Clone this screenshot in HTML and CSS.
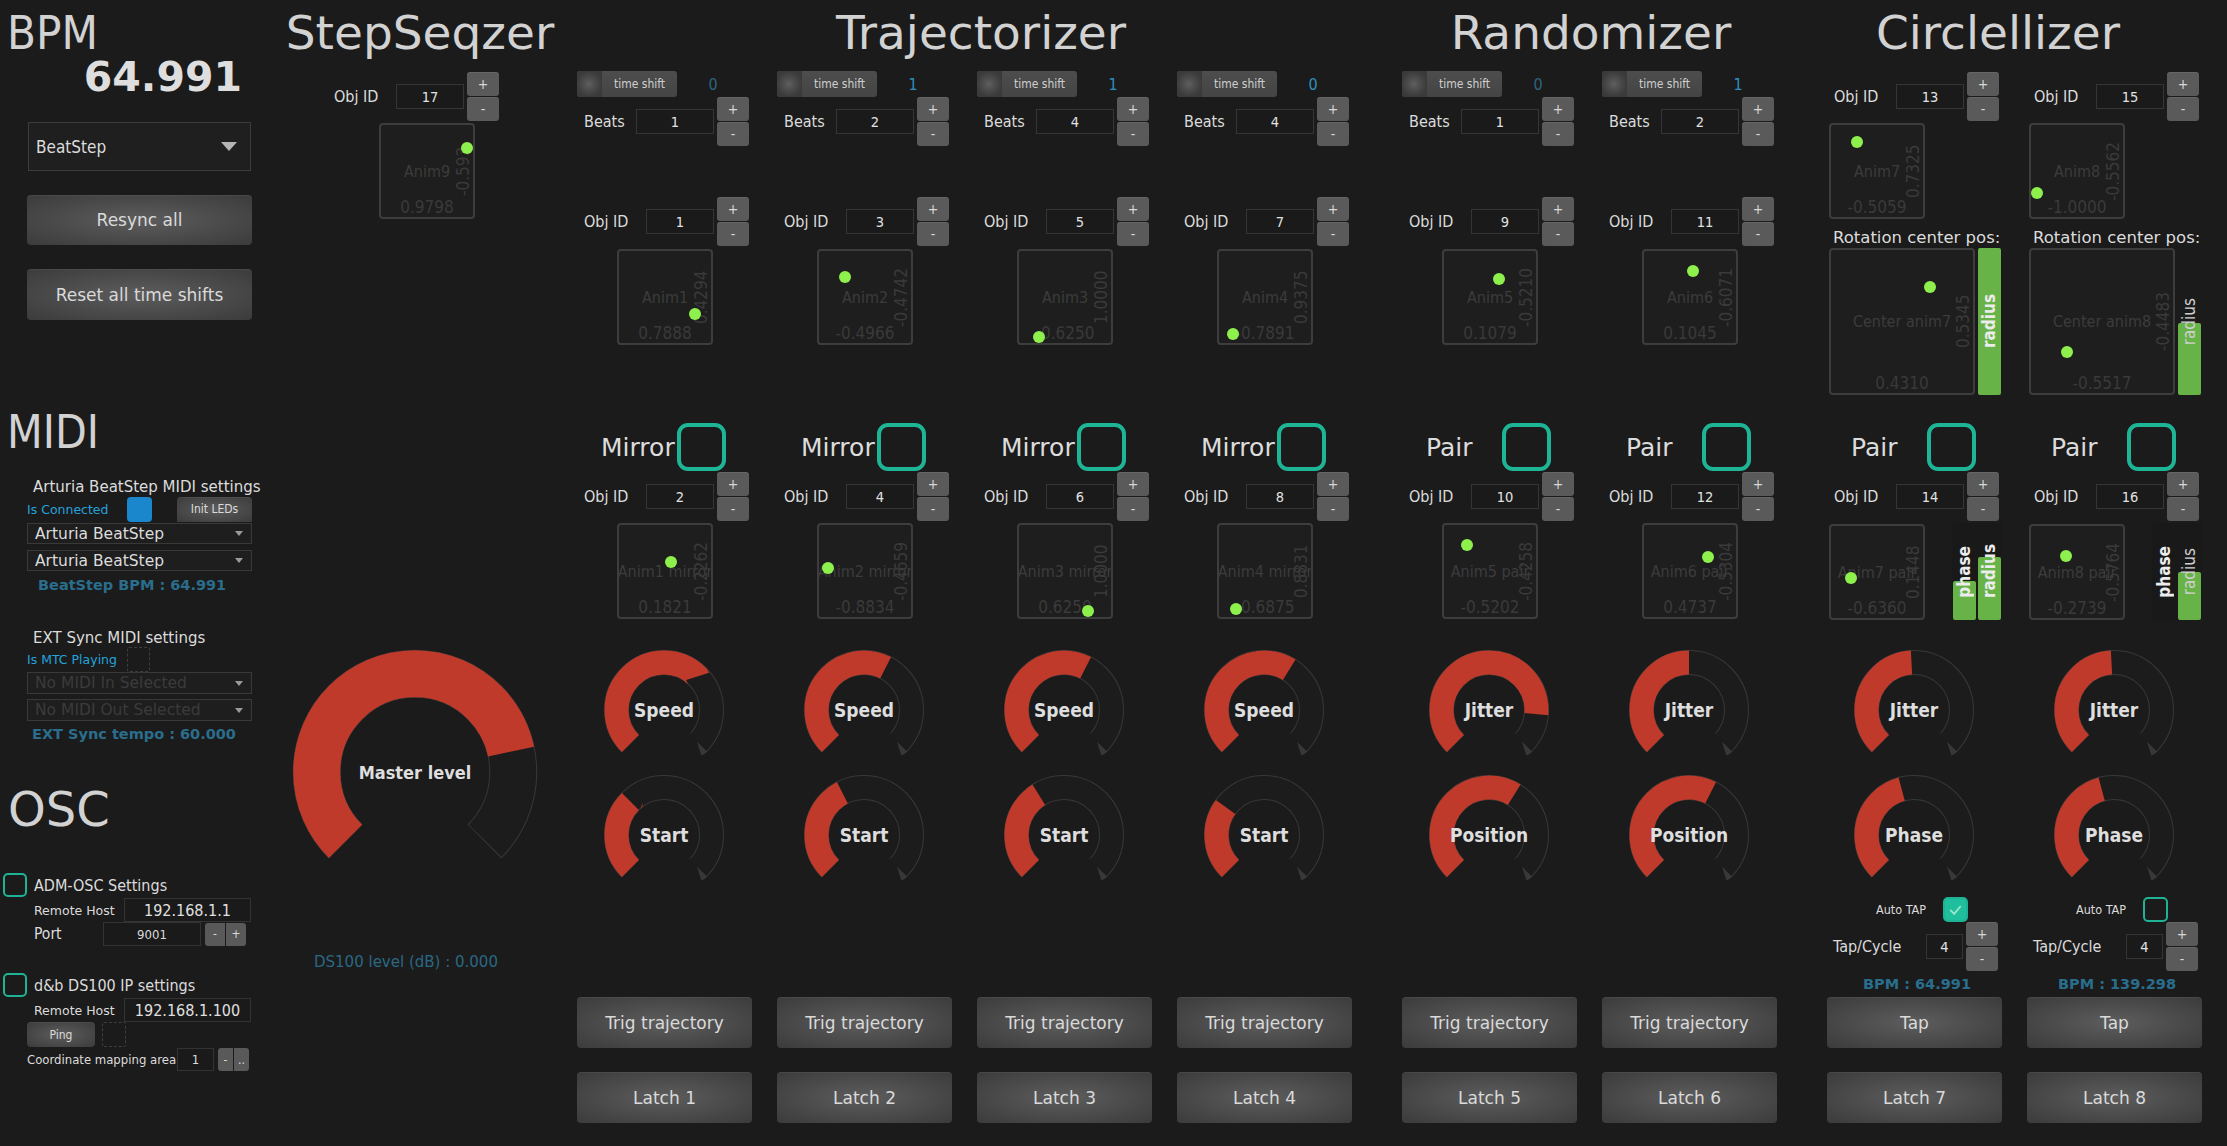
FILE: index.html
```html
<!DOCTYPE html>
<html>
<head>
<meta charset="utf-8">
<title>Sequencer</title>
<link rel="stylesheet" href="styles.css">
</head>
<body>
<div class="app">

  <aside class="left">
    <div class="big-h bpm-h">BPM</div>
    <div class="bpm-val">64.991</div>
    <div class="combo-big"><span>BeatStep</span><i class="tri"></i></div>
    <div class="btn wide resync">Resync all</div>
    <div class="btn wide reset">Reset all time shifts</div>

    <div class="big-h sub-h midi-h">MIDI</div>
    <div class="grp-t">Arturia BeatStep MIDI settings</div>
    <div class="lrow conn"><span class="blue-lbl">Is Connected</span><span class="led-on"></span><span class="btn init">Init LEDs</span></div>
    <div class="combo-s c1"><span>Arturia BeatStep</span><i class="arr"></i></div>
    <div class="combo-s c2"><span>Arturia BeatStep</span><i class="arr"></i></div>
    <div class="stat s1">BeatStep BPM : 64.991</div>
    <div class="grp-t ext">EXT Sync MIDI settings</div>
    <div class="lrow mtc"><span class="blue-lbl">Is MTC Playing</span><span class="dash-box"></span></div>
    <div class="combo-s dis d1"><span>No MIDI In Selected</span><i class="arr"></i></div>
    <div class="combo-s dis d2"><span>No MIDI Out Selected</span><i class="arr"></i></div>
    <div class="stat s2">EXT Sync tempo : 60.000</div>

    <div class="big-h sub-h osc-h">OSC</div>
    <div class="lrow adm"><span class="chk-s"></span><span class="grp-t2">ADM-OSC Settings</span></div>
    <div class="lrow rh"><span class="sm-lbl">Remote Host</span><span class="inp-l">192.168.1.1</span></div>
    <div class="lrow port"><span class="md-lbl">Port</span><span class="inp-port">9001</span><span class="mini m1">-</span><span class="mini">+</span></div>
    <div class="lrow ds"><span class="chk-s"></span><span class="grp-t2">d&amp;b DS100 IP settings</span></div>
    <div class="lrow rh rh2"><span class="sm-lbl">Remote Host</span><span class="inp-l">192.168.1.100</span></div>
    <div class="lrow ping"><span class="btn ping-b">Ping</span><span class="dash-box db2"></span></div>
    <div class="lrow coord"><span class="coord-lbl">Coordinate mapping area</span><span class="inp-c">1</span><span class="mini m1 mc">-</span><span class="mini mc">..</span></div>
  </aside>

  <section class="sect step">
    <h1 class="title">StepSeqzer</h1>
    <div class="step-col">
      <div class="frow top10"><span class="lbl">Obj ID</span><span class="inp">17</span><span class="stepper"><b>+</b><b>-</b></span></div>
      <div class="pad p-step"><span class="pad-name">Anim9</span><span class="pad-x">0.9798</span><span class="pad-y">-0.593</span><i class="dot" style="left:93%;top:25%"></i></div>
    </div>
    <div class="knob master">
      <svg viewBox="-122 -122 244 244"><circle class="ke big" r="98.25" transform="rotate(135)" pathLength="360"/><circle class="kt big" r="98.25" transform="rotate(135.6)" pathLength="360"/><circle class="kv big" r="98.25" transform="rotate(135)" pathLength="360" style="stroke-dasharray:213 360"/></svg>
      <span class="k-lbl">Master level</span>
    </div>
    <div class="ds-level">DS100 level (dB) : 0.000</div>
  </section>

  <section class="sect traj">
    <h1 class="title">Trajectorizer</h1>
    <div class="cols">
      <!-- col 1 -->
      <div class="col">
        <div class="ts-row"><div class="ts-btn"><span class="ts-led"></span><span class="ts-txt">time shift</span></div><span class="ts-val dim">0</span></div>
        <div class="frow"><span class="lbl w52">Beats</span><span class="inp w78">1</span><span class="stepper"><b>+</b><b>-</b></span></div>
        <div class="frow top51"><span class="lbl">Obj ID</span><span class="inp">1</span><span class="stepper"><b>+</b><b>-</b></span></div>
        <div class="pad p-main"><span class="pad-name">Anim1</span><span class="pad-x">0.7888</span><span class="pad-y">0.4294</span><i class="dot" style="left:83%;top:69%"></i></div>
        <div class="chk-row"><span class="chk-lbl">Mirror</span><span class="chk-big"></span></div>
        <div class="frow top1"><span class="lbl">Obj ID</span><span class="inp">2</span><span class="stepper"><b>+</b><b>-</b></span></div>
        <div class="pad p-main p2"><span class="pad-name">Anim1 mirror</span><span class="pad-x">0.1821</span><span class="pad-y">-0.2262</span><i class="dot" style="left:57%;top:40%"></i></div>
        <div class="knob k1"><svg viewBox="-60 -60 120 120"><circle class="ke" r="47.5" transform="rotate(135)" pathLength="360"/><circle class="kt" r="47.5" transform="rotate(136.2)" pathLength="360"/><circle class="kv" r="47.5" transform="rotate(135)" pathLength="360" style="stroke-dasharray:180 360"/></svg><span class="k-lbl">Speed</span></div>
        <div class="knob k2"><svg viewBox="-60 -60 120 120"><circle class="ke" r="47.5" transform="rotate(135)" pathLength="360"/><circle class="kt" r="47.5" transform="rotate(136.2)" pathLength="360"/><circle class="kv" r="47.5" transform="rotate(135)" pathLength="360" style="stroke-dasharray:90 360"/></svg><span class="k-lbl">Start</span></div>
        <div class="btn colbtn trig">Trig trajectory</div>
        <div class="btn colbtn latch">Latch 1</div>
      </div>
      <!-- col 2 -->
      <div class="col">
        <div class="ts-row"><div class="ts-btn"><span class="ts-led"></span><span class="ts-txt">time shift</span></div><span class="ts-val">1</span></div>
        <div class="frow"><span class="lbl w52">Beats</span><span class="inp w78">2</span><span class="stepper"><b>+</b><b>-</b></span></div>
        <div class="frow top51"><span class="lbl">Obj ID</span><span class="inp">3</span><span class="stepper"><b>+</b><b>-</b></span></div>
        <div class="pad p-main"><span class="pad-name">Anim2</span><span class="pad-x">-0.4966</span><span class="pad-y">-0.4742</span><i class="dot" style="left:28%;top:28%"></i></div>
        <div class="chk-row"><span class="chk-lbl">Mirror</span><span class="chk-big"></span></div>
        <div class="frow top1"><span class="lbl">Obj ID</span><span class="inp">4</span><span class="stepper"><b>+</b><b>-</b></span></div>
        <div class="pad p-main p2"><span class="pad-name">Anim2 mirror</span><span class="pad-x">-0.8834</span><span class="pad-y">-0.4659</span><i class="dot" style="left:10%;top:47%"></i></div>
        <div class="knob k1"><svg viewBox="-60 -60 120 120"><circle class="ke" r="47.5" transform="rotate(135)" pathLength="360"/><circle class="kt" r="47.5" transform="rotate(136.2)" pathLength="360"/><circle class="kv" r="47.5" transform="rotate(135)" pathLength="360" style="stroke-dasharray:162 360"/></svg><span class="k-lbl">Speed</span></div>
        <div class="knob k2"><svg viewBox="-60 -60 120 120"><circle class="ke" r="47.5" transform="rotate(135)" pathLength="360"/><circle class="kt" r="47.5" transform="rotate(136.2)" pathLength="360"/><circle class="kv" r="47.5" transform="rotate(135)" pathLength="360" style="stroke-dasharray:108 360"/></svg><span class="k-lbl">Start</span></div>
        <div class="btn colbtn trig">Trig trajectory</div>
        <div class="btn colbtn latch">Latch 2</div>
      </div>
      <!-- col 3 -->
      <div class="col">
        <div class="ts-row"><div class="ts-btn"><span class="ts-led"></span><span class="ts-txt">time shift</span></div><span class="ts-val">1</span></div>
        <div class="frow"><span class="lbl w52">Beats</span><span class="inp w78">4</span><span class="stepper"><b>+</b><b>-</b></span></div>
        <div class="frow top51"><span class="lbl">Obj ID</span><span class="inp">5</span><span class="stepper"><b>+</b><b>-</b></span></div>
        <div class="pad p-main"><span class="pad-name">Anim3</span><span class="pad-x">-0.6250</span><span class="pad-y">1.0000</span><i class="dot" style="left:22%;top:93%"></i></div>
        <div class="chk-row"><span class="chk-lbl">Mirror</span><span class="chk-big"></span></div>
        <div class="frow top1"><span class="lbl">Obj ID</span><span class="inp">6</span><span class="stepper"><b>+</b><b>-</b></span></div>
        <div class="pad p-main p2"><span class="pad-name">Anim3 mirror</span><span class="pad-x">0.6250</span><span class="pad-y">1.0000</span><i class="dot" style="left:75%;top:94%"></i></div>
        <div class="knob k1"><svg viewBox="-60 -60 120 120"><circle class="ke" r="47.5" transform="rotate(135)" pathLength="360"/><circle class="kt" r="47.5" transform="rotate(136.2)" pathLength="360"/><circle class="kv" r="47.5" transform="rotate(135)" pathLength="360" style="stroke-dasharray:162 360"/></svg><span class="k-lbl">Speed</span></div>
        <div class="knob k2"><svg viewBox="-60 -60 120 120"><circle class="ke" r="47.5" transform="rotate(135)" pathLength="360"/><circle class="kt" r="47.5" transform="rotate(136.2)" pathLength="360"/><circle class="kv" r="47.5" transform="rotate(135)" pathLength="360" style="stroke-dasharray:103 360"/></svg><span class="k-lbl">Start</span></div>
        <div class="btn colbtn trig">Trig trajectory</div>
        <div class="btn colbtn latch">Latch 3</div>
      </div>
      <!-- col 4 -->
      <div class="col">
        <div class="ts-row"><div class="ts-btn"><span class="ts-led"></span><span class="ts-txt">time shift</span></div><span class="ts-val">0</span></div>
        <div class="frow"><span class="lbl w52">Beats</span><span class="inp w78">4</span><span class="stepper"><b>+</b><b>-</b></span></div>
        <div class="frow top51"><span class="lbl">Obj ID</span><span class="inp">7</span><span class="stepper"><b>+</b><b>-</b></span></div>
        <div class="pad p-main"><span class="pad-name">Anim4</span><span class="pad-x">-0.7891</span><span class="pad-y">0.9375</span><i class="dot" style="left:15%;top:90%"></i></div>
        <div class="chk-row"><span class="chk-lbl">Mirror</span><span class="chk-big"></span></div>
        <div class="frow top1"><span class="lbl">Obj ID</span><span class="inp">8</span><span class="stepper"><b>+</b><b>-</b></span></div>
        <div class="pad p-main p2"><span class="pad-name">Anim4 mirror</span><span class="pad-x">-0.6875</span><span class="pad-y">0.8831</span><i class="dot" style="left:19%;top:91%"></i></div>
        <div class="knob k1"><svg viewBox="-60 -60 120 120"><circle class="ke" r="47.5" transform="rotate(135)" pathLength="360"/><circle class="kt" r="47.5" transform="rotate(136.2)" pathLength="360"/><circle class="kv" r="47.5" transform="rotate(135)" pathLength="360" style="stroke-dasharray:167 360"/></svg><span class="k-lbl">Speed</span></div>
        <div class="knob k2"><svg viewBox="-60 -60 120 120"><circle class="ke" r="47.5" transform="rotate(135)" pathLength="360"/><circle class="kt" r="47.5" transform="rotate(136.2)" pathLength="360"/><circle class="kv" r="47.5" transform="rotate(135)" pathLength="360" style="stroke-dasharray:81 360"/></svg><span class="k-lbl">Start</span></div>
        <div class="btn colbtn trig">Trig trajectory</div>
        <div class="btn colbtn latch">Latch 4</div>
      </div>
    </div>
  </section>

  <section class="sect rand">
    <h1 class="title">Randomizer</h1>
    <div class="cols">
      <div class="col">
        <div class="ts-row"><div class="ts-btn"><span class="ts-led"></span><span class="ts-txt">time shift</span></div><span class="ts-val dim">0</span></div>
        <div class="frow"><span class="lbl w52">Beats</span><span class="inp w78">1</span><span class="stepper"><b>+</b><b>-</b></span></div>
        <div class="frow top51"><span class="lbl">Obj ID</span><span class="inp">9</span><span class="stepper"><b>+</b><b>-</b></span></div>
        <div class="pad p-main"><span class="pad-name">Anim5</span><span class="pad-x">0.1079</span><span class="pad-y">-0.5210</span><i class="dot" style="left:60%;top:30%"></i></div>
        <div class="chk-row"><span class="chk-lbl">Pair</span><span class="chk-big"></span></div>
        <div class="frow top1"><span class="lbl">Obj ID</span><span class="inp">10</span><span class="stepper"><b>+</b><b>-</b></span></div>
        <div class="pad p-main p2"><span class="pad-name">Anim5 pair</span><span class="pad-x">-0.5202</span><span class="pad-y">-0.4258</span><i class="dot" style="left:25%;top:22%"></i></div>
        <div class="knob k1"><svg viewBox="-60 -60 120 120"><circle class="ke" r="47.5" transform="rotate(135)" pathLength="360"/><circle class="kt" r="47.5" transform="rotate(136.2)" pathLength="360"/><circle class="kv" r="47.5" transform="rotate(135)" pathLength="360" style="stroke-dasharray:230 360"/></svg><span class="k-lbl">Jitter</span></div>
        <div class="knob k2"><svg viewBox="-60 -60 120 120"><circle class="ke" r="47.5" transform="rotate(135)" pathLength="360"/><circle class="kt" r="47.5" transform="rotate(136.2)" pathLength="360"/><circle class="kv" r="47.5" transform="rotate(135)" pathLength="360" style="stroke-dasharray:167 360"/></svg><span class="k-lbl">Position</span></div>
        <div class="btn colbtn trig">Trig trajectory</div>
        <div class="btn colbtn latch">Latch 5</div>
      </div>
      <div class="col">
        <div class="ts-row"><div class="ts-btn"><span class="ts-led"></span><span class="ts-txt">time shift</span></div><span class="ts-val">1</span></div>
        <div class="frow"><span class="lbl w52">Beats</span><span class="inp w78">2</span><span class="stepper"><b>+</b><b>-</b></span></div>
        <div class="frow top51"><span class="lbl">Obj ID</span><span class="inp">11</span><span class="stepper"><b>+</b><b>-</b></span></div>
        <div class="pad p-main"><span class="pad-name">Anim6</span><span class="pad-x">0.1045</span><span class="pad-y">-0.6071</span><i class="dot" style="left:53%;top:22%"></i></div>
        <div class="chk-row"><span class="chk-lbl">Pair</span><span class="chk-big"></span></div>
        <div class="frow top1"><span class="lbl">Obj ID</span><span class="inp">12</span><span class="stepper"><b>+</b><b>-</b></span></div>
        <div class="pad p-main p2"><span class="pad-name">Anim6 pair</span><span class="pad-x">0.4737</span><span class="pad-y">-0.5304</span><i class="dot" style="left:70%;top:35%"></i></div>
        <div class="knob k1"><svg viewBox="-60 -60 120 120"><circle class="ke" r="47.5" transform="rotate(135)" pathLength="360"/><circle class="kt" r="47.5" transform="rotate(136.2)" pathLength="360"/><circle class="kv" r="47.5" transform="rotate(135)" pathLength="360" style="stroke-dasharray:135 360"/></svg><span class="k-lbl">Jitter</span></div>
        <div class="knob k2"><svg viewBox="-60 -60 120 120"><circle class="ke" r="47.5" transform="rotate(135)" pathLength="360"/><circle class="kt" r="47.5" transform="rotate(136.2)" pathLength="360"/><circle class="kv" r="47.5" transform="rotate(135)" pathLength="360" style="stroke-dasharray:162 360"/></svg><span class="k-lbl">Position</span></div>
        <div class="btn colbtn trig">Trig trajectory</div>
        <div class="btn colbtn latch">Latch 6</div>
      </div>
    </div>
  </section>

  <section class="sect circ">
    <h1 class="title">Circlellizer</h1>
    <div class="cols">
      <div class="col">
        <div class="frow top10"><span class="lbl">Obj ID</span><span class="inp">13</span><span class="stepper"><b>+</b><b>-</b></span></div>
        <div class="pad p-circ"><span class="pad-name">Anim7</span><span class="pad-x">-0.5059</span><span class="pad-y">0.7325</span><i class="dot" style="left:28%;top:19%"></i></div>
        <div class="rot-lbl">Rotation center pos:</div>
        <div class="big-row">
          <div class="pad big-pad"><span class="pad-name">Center anim7</span><span class="pad-x">0.4310</span><span class="pad-y">0.5345</span><i class="dot" style="left:70%;top:26%"></i></div>
          <div class="vbar tall"><i class="fill" style="height:100%"></i><span class="v-lbl strong">radius</span></div>
        </div>
        <div class="chk-row"><span class="chk-lbl">Pair</span><span class="chk-big"></span></div>
        <div class="frow top1"><span class="lbl">Obj ID</span><span class="inp">14</span><span class="stepper"><b>+</b><b>-</b></span></div>
        <div class="pair-row">
          <div class="pad p-circ"><span class="pad-name">Anim7 pair</span><span class="pad-x">-0.6360</span><span class="pad-y">0.1448</span><i class="dot" style="left:22%;top:56%"></i></div>
          <div class="bars">
            <div class="vbar"><i class="fill" style="height:40%"></i><span class="v-lbl strong">phase</span></div>
            <div class="vbar"><i class="fill" style="height:65%"></i><span class="v-lbl strong">radius</span></div>
          </div>
        </div>
        <div class="knob k1 kc"><svg viewBox="-60 -60 120 120"><circle class="ke" r="47.5" transform="rotate(135)" pathLength="360"/><circle class="kt" r="47.5" transform="rotate(136.2)" pathLength="360"/><circle class="kv" r="47.5" transform="rotate(135)" pathLength="360" style="stroke-dasharray:132 360"/></svg><span class="k-lbl">Jitter</span></div>
        <div class="knob k2"><svg viewBox="-60 -60 120 120"><circle class="ke" r="47.5" transform="rotate(135)" pathLength="360"/><circle class="kt" r="47.5" transform="rotate(136.2)" pathLength="360"/><circle class="kv" r="47.5" transform="rotate(135)" pathLength="360" style="stroke-dasharray:120 360"/></svg><span class="k-lbl">Phase</span></div>
        <div class="auto-row"><span class="auto-lbl">Auto TAP</span><span class="chk-sm on"><svg viewBox="0 0 24 24"><polyline points="6,12.5 10.5,17 18,8" /></svg></span></div>
        <div class="frow tapc"><span class="lbl w94">Tap/Cycle</span><span class="inp w37">4</span><span class="stepper"><b>+</b><b>-</b></span></div>
        <div class="tap-bpm">BPM : 64.991</div>
        <div class="btn colbtn tap">Tap</div>
        <div class="btn colbtn latch">Latch 7</div>
      </div>
      <div class="col">
        <div class="frow top10"><span class="lbl">Obj ID</span><span class="inp">15</span><span class="stepper"><b>+</b><b>-</b></span></div>
        <div class="pad p-circ"><span class="pad-name">Anim8</span><span class="pad-x">-1.0000</span><span class="pad-y">-0.5562</span><i class="dot" style="left:6%;top:74%"></i></div>
        <div class="rot-lbl">Rotation center pos:</div>
        <div class="big-row">
          <div class="pad big-pad"><span class="pad-name">Center anim8</span><span class="pad-x">-0.5517</span><span class="pad-y">-0.4483</span><i class="dot" style="left:25%;top:71%"></i></div>
          <div class="vbar tall"><i class="fill" style="height:49%"></i><span class="v-lbl">radius</span></div>
        </div>
        <div class="chk-row"><span class="chk-lbl">Pair</span><span class="chk-big"></span></div>
        <div class="frow top1"><span class="lbl">Obj ID</span><span class="inp">16</span><span class="stepper"><b>+</b><b>-</b></span></div>
        <div class="pair-row">
          <div class="pad p-circ"><span class="pad-name">Anim8 pair</span><span class="pad-x">-0.2739</span><span class="pad-y">-0.5764</span><i class="dot" style="left:38%;top:33%"></i></div>
          <div class="bars">
            <div class="vbar"><i class="fill" style="height:0%"></i><span class="v-lbl strong">phase</span></div>
            <div class="vbar"><i class="fill" style="height:49%"></i><span class="v-lbl">radius</span></div>
          </div>
        </div>
        <div class="knob k1 kc"><svg viewBox="-60 -60 120 120"><circle class="ke" r="47.5" transform="rotate(135)" pathLength="360"/><circle class="kt" r="47.5" transform="rotate(136.2)" pathLength="360"/><circle class="kv" r="47.5" transform="rotate(135)" pathLength="360" style="stroke-dasharray:132 360"/></svg><span class="k-lbl">Jitter</span></div>
        <div class="knob k2"><svg viewBox="-60 -60 120 120"><circle class="ke" r="47.5" transform="rotate(135)" pathLength="360"/><circle class="kt" r="47.5" transform="rotate(136.2)" pathLength="360"/><circle class="kv" r="47.5" transform="rotate(135)" pathLength="360" style="stroke-dasharray:120 360"/></svg><span class="k-lbl">Phase</span></div>
        <div class="auto-row"><span class="auto-lbl">Auto TAP</span><span class="chk-sm"></span></div>
        <div class="frow tapc"><span class="lbl w94">Tap/Cycle</span><span class="inp w37">4</span><span class="stepper"><b>+</b><b>-</b></span></div>
        <div class="tap-bpm">BPM : 139.298</div>
        <div class="btn colbtn tap">Tap</div>
        <div class="btn colbtn latch">Latch 8</div>
      </div>
    </div>
  </section>

</div>
</body>
</html>
```

FILE: styles.css
```css
* { box-sizing: border-box; }

html, body {
  margin: 0;
  padding: 0;
}

body {
  width: 2227px;
  height: 1146px;
  overflow: hidden;
  background: #1b1b1b;
  color: #dcdcdc;
  font-family: "DejaVu Sans Condensed", "DejaVu Sans", sans-serif;
  font-stretch: semi-condensed;
}

/* texts that need the wider face */
.title, .osc-h, .btn.wide, .btn.colbtn, .chk-lbl, .grp-t, .combo-s,
.stat, .ds-level, .tap-bpm, .rot-lbl, .blue-lbl, .sm-lbl, .bpm-val {
  font-family: "DejaVu Sans", sans-serif;
  font-stretch: normal;
}

.app {
  display: flex;
  height: 1146px;
}

/* ---------- generic ---------- */
.title, .big-h {
  margin: 0;
  height: 62px;
  font-size: 47px;
  line-height: 66px;
  font-weight: normal;
  color: #d2d2d2;
  white-space: nowrap;
}

.btn {
  display: flex;
  align-items: center;
  justify-content: center;
  color: #dadada;
  border-radius: 4px;
  background: radial-gradient(ellipse at 50% 50%, #5d5d5d 0%, #4a4a4a 55%, #3b3b3b 100%);
  box-shadow: inset 0 1px 0 rgba(255,255,255,0.06);
  white-space: nowrap;
}

/* ---------- left panel ---------- */
.left {
  width: 280px;
  flex: none;
  display: flex;
  flex-direction: column;
  background: #1b1b1b;
}

.bpm-h { padding-left: 7px; }

.bpm-val {
  height: 34px;
  font-size: 41px;
  line-height: 30px;
  font-weight: bold;
  color: #dedede;
  text-align: right;
  padding-right: 38px;
}

.combo-big {
  margin: 26px 0 0 28px;
  width: 223px;
  height: 49px;
  border: 1px solid #3c3c3c;
  background: #1f1f1f;
  display: flex;
  align-items: center;
  justify-content: space-between;
  padding: 0 13px 0 7px;
  font-size: 17px;
  color: #dcdcdc;
}

.tri {
  width: 0;
  height: 0;
  border-left: 8px solid transparent;
  border-right: 8px solid transparent;
  border-top: 9px solid #b4b4b4;
}

.btn.wide {
  margin-left: 27px;
  width: 225px;
  font-size: 17px;
}
.resync { margin-top: 24px; height: 50px; }
.reset { margin-top: 24px; height: 51px; }

.sub-h { font-size: 46px; padding-left: 7px; }
.midi-h { margin-top: 79px; }
.osc-h { margin-top: 33px; padding-left: 8px; font-size: 48px; }

.grp-t {
  margin-top: 17px;
  height: 18px;
  line-height: 18px;
  padding-left: 33px;
  font-size: 15px;
  white-space: nowrap;
}
.grp-t.ext { margin-top: 35px; }

.lrow {
  display: flex;
  align-items: center;
}

.conn { height: 26px; padding-left: 27px; }
.blue-lbl {
  width: 100px;
  font-size: 12.5px;
  color: #24a3dc;
  white-space: nowrap;
}
.led-on {
  width: 25px;
  height: 25px;
  border-radius: 4px;
  background: #1a86cc;
}
.btn.init {
  margin-left: 25px;
  width: 75px;
  height: 25px;
  font-size: 12px;
  border-radius: 4px 4px 0 0;
}

.combo-s {
  margin-left: 27px;
  width: 225px;
  height: 21px;
  border: 1px solid #393939;
  background: #1e1e1e;
  display: flex;
  align-items: center;
  justify-content: space-between;
  padding: 0 8px 0 7px;
  font-size: 15.5px;
  color: #dcdcdc;
  white-space: nowrap;
}
.combo-s.c1 { margin-top: 1px; }
.combo-s.c2 { margin-top: 6px; }
.combo-s.dis { color: #3b3b3b; height: 22px; }
.combo-s.d2 { margin-top: 5px; }

.arr {
  width: 0;
  height: 0;
  border-left: 4px solid transparent;
  border-right: 4px solid transparent;
  border-top: 5px solid #9a9a9a;
}

.stat {
  height: 18px;
  line-height: 18px;
  font-size: 14.5px;
  font-weight: bold;
  color: #2a6d8c;
  white-space: nowrap;
}
.s1 { margin-top: 5px; padding-left: 38px; }
.s2 { margin-top: 4px; padding-left: 32px; }

.mtc { height: 25px; padding-left: 27px; }
.dash-box {
  width: 23px;
  height: 25px;
  border: 1px dashed #3e3e3e;
  border-radius: 2px;
}

.adm { margin-top: 35px; height: 24px; padding-left: 3px; }
.ds { margin-top: 27px; height: 24px; padding-left: 3px; }
.chk-s {
  width: 24px;
  height: 24px;
  border: 2px solid #1db394;
  border-radius: 5px;
}
.grp-t2 {
  margin-left: 7px;
  font-size: 16px;
  white-space: nowrap;
}

.rh { height: 24px; padding-left: 34px; margin-top: 1px; }
.sm-lbl {
  width: 90px;
  font-size: 12.5px;
  white-space: nowrap;
}
.inp-l {
  width: 127px;
  height: 24px;
  border: 1px solid #333;
  background: #1a1a1a;
  display: flex;
  align-items: center;
  justify-content: center;
  font-size: 16px;
  color: #e0e0e0;
}

.port { height: 24px; padding-left: 34px; }
.md-lbl { width: 69px; font-size: 15.5px; }
.inp-port {
  width: 98px;
  height: 24px;
  border: 1px solid #333;
  background: #1a1a1a;
  display: flex;
  align-items: center;
  justify-content: center;
  font-size: 13px;
}
.mini {
  width: 20px;
  height: 23px;
  margin-left: 1px;
  background: #595959;
  display: flex;
  align-items: center;
  justify-content: center;
  font-size: 12px;
  color: #dcdcdc;
}
.mini.m1 { margin-left: 4px; border-radius: 3px 0 0 3px; }
.mini:last-child { border-radius: 0 3px 3px 0; }

.ping { height: 25px; padding-left: 27px; }
.btn.ping-b {
  width: 68px;
  height: 25px;
  font-size: 12px;
}
.db2 { margin-left: 7px; width: 24px; }

.coord { height: 23px; padding-left: 27px; margin-top: 1px; }
.coord-lbl { width: 150px; font-size: 13px; white-space: nowrap; }
.inp-c {
  width: 37px;
  height: 23px;
  border: 1px solid #333;
  background: #1a1a1a;
  display: flex;
  align-items: center;
  justify-content: center;
  font-size: 13px;
}
.mini.mc { width: 15px; }

/* ---------- sections ---------- */
.sect {
  flex: none;
  display: flex;
  flex-direction: column;
}
.sect .title { text-align: center; }

.step { width: 280px; background: #1b1b1b; }
.traj { width: 800px; margin-right: 25px; }
.traj .title { padding-left: 42px; }
.rand { width: 400px; margin-right: 25px; }
.rand .title { padding-left: 12px; }
.circ { width: 400px; }
.circ .title { padding-right: 24px; }

.cols { display: flex; }
.col {
  width: 200px;
  flex: none;
  display: flex;
  flex-direction: column;
}

.step-col {
  margin-left: 30px;
  width: 200px;
  display: flex;
  flex-direction: column;
}

/* time shift */
.ts-row {
  margin-top: 9px;
  height: 26px;
  display: flex;
  align-items: center;
}
.ts-btn {
  margin-left: 17px;
  width: 100px;
  height: 26px;
  border-radius: 3px;
  background: linear-gradient(180deg, #4d4d4d 0%, #444 100%);
  display: flex;
  align-items: center;
  overflow: hidden;
}
.ts-led {
  width: 25px;
  height: 26px;
  background: radial-gradient(circle at 50% 50%, #5e5e5e 0%, #474747 45%, #3a3a3a 75%);
  border-right: 1px solid #3a3a3a;
}
.ts-txt {
  flex: 1;
  text-align: center;
  font-size: 12px;
  color: #cfcfcf;
}
.ts-val {
  margin-left: 30px;
  width: 12px;
  text-align: center;
  font-size: 16px;
  color: #2f8fbf;
}
.ts-val.dim { color: #2a6680; }

/* field rows */
.frow {
  height: 49px;
  display: flex;
  align-items: center;
  padding-left: 24px;
}
.top10 { margin-top: 10px; }
.top51 { margin-top: 51px; }
.top1 { margin-top: 1px; }

.lbl {
  flex: 0 0 62px;
  font-size: 16px;
  color: #dcdcdc;
  white-space: nowrap;
}
.lbl.w52 { flex-basis: 52px; }
.lbl.w94 { flex-basis: 93px; }

.inp {
  width: 68px;
  height: 25px;
  border: 1px solid #353535;
  background: #1a1a1a;
  display: flex;
  align-items: center;
  justify-content: center;
  font-size: 14.5px;
  color: #e2e2e2;
}
.inp.w78 { width: 78px; }
.inp.w37 { width: 37px; }

.stepper {
  margin-left: 3px;
  display: flex;
  flex-direction: column;
  gap: 1px;
}
.stepper b {
  width: 32px;
  height: 24px;
  border-radius: 3px;
  background: #5a5a5a;
  box-shadow: inset 0 1px 0 rgba(255,255,255,0.08);
  display: flex;
  align-items: center;
  justify-content: center;
  font-weight: normal;
  font-size: 14px;
  color: #d8d8d8;
}

/* pads */
.pad {
  position: relative;
  width: 96px;
  height: 96px;
  border: 2px solid #3d3d3d;
  border-radius: 4px;
  background: #1e1e1e;
  flex: none;
}
.p-main { margin: 3px 0 0 57px; }
.p-main.p2 { margin-top: 2px; }
.p-step { margin: 2px 0 0 69px; }
.p-circ { margin: 2px 0 0 19px; }

.pad-name {
  position: absolute;
  left: -10px;
  right: -10px;
  top: 37px;
  text-align: center;
  font-size: 16px;
  color: #3c3c3c;
  white-space: nowrap;
}
.pad-x {
  position: absolute;
  left: 0;
  right: 0;
  bottom: 0;
  text-align: center;
  font-size: 17px;
  line-height: 20px;
  color: #3a3a3a;
  white-space: nowrap;
}
.pad-y {
  position: absolute;
  right: 0;
  top: 0;
  bottom: 0;
  width: 20px;
  writing-mode: vertical-rl;
  transform: rotate(180deg);
  text-align: center;
  font-size: 17px;
  line-height: 20px;
  color: #3a3a3a;
  white-space: nowrap;
}
.dot {
  position: absolute;
  width: 12px;
  height: 12px;
  border-radius: 50%;
  background: #8ef04c;
  transform: translate(-50%, -50%);
}

/* checkbox rows */
.chk-row {
  margin-top: 78px;
  height: 48px;
  display: flex;
  align-items: center;
  padding-left: 41px;
}
.circ .chk-row { margin-top: 28px; }
.chk-lbl {
  width: 76px;
  font-size: 25px;
  color: #dcdcdc;
}
.chk-big {
  width: 49px;
  height: 48px;
  border: 4px solid #1eb597;
  border-radius: 11px;
}

/* knobs */
.knob {
  display: grid;
  flex: none;
}
.knob > svg, .knob > .k-lbl {
  grid-area: 1 / 1;
}
.knob > svg {
  width: 100%;
  height: 100%;
  overflow: visible;
}
.k-lbl {
  place-self: center;
  font-weight: bold;
  font-size: 19px;
  color: #dedede;
  white-space: nowrap;
}
.knob.k1 { width: 120px; height: 120px; margin: 31px 0 0 44px; }
.knob.k1.kc { margin-top: 30px; }
.knob.k2 { width: 120px; height: 120px; margin: 5px 0 0 44px; }
.knob.master { width: 244px; height: 244px; margin: 431px 0 0 13px; }
.master .k-lbl { font-size: 18px; }

.knob circle { fill: none; }
.ke { stroke: #383838; stroke-width: 25; stroke-dasharray: 270 90; }
.kt { stroke: #1c1c1c; stroke-width: 23; stroke-dasharray: 267.6 92.4; }
.kv { stroke: #bf3a2a; stroke-width: 24; }
.ke.big { stroke-width: 48; }
.kt.big { stroke-width: 46; stroke-dasharray: 268.8 91.2; }
.kv.big { stroke-width: 47; }

.ds-level {
  margin-top: 58px;
  height: 20px;
  line-height: 20px;
  padding-left: 34px;
  font-size: 15px;
  color: #2a6883;
  white-space: nowrap;
}

/* column buttons */
.btn.colbtn {
  margin-left: 17px;
  width: 175px;
  height: 51px;
  font-size: 17px;
  flex: none;
}
.trig { margin-top: 102px; }
.latch { margin-top: 24px; }
.tap { margin-top: 3px; }

/* circlellizer */
.rot-lbl {
  margin-top: 9px;
  height: 20px;
  line-height: 20px;
  padding-left: 23px;
  font-size: 16.5px;
  white-space: nowrap;
}
.big-row {
  display: flex;
  height: 147px;
}
.big-pad {
  margin-left: 19px;
  width: 146px;
  height: 147px;
}
.big-pad .pad-name { top: 62px; }

.vbar {
  width: 23px;
  display: grid;
}
.vbar.tall { margin-left: 3px; height: 147px; }
.vbar > .fill, .vbar > .v-lbl { grid-area: 1 / 1; }
.fill {
  align-self: end;
  background: #67b347;
  border-radius: 2px;
}
.v-lbl {
  place-self: center;
  writing-mode: vertical-rl;
  transform: rotate(180deg);
  font-size: 17px;
  color: #cfcfcf;
  white-space: nowrap;
  line-height: 23px;
}
.v-lbl.strong { font-weight: bold; color: #ececec; }

.pair-row {
  margin-top: 2px;
  height: 97px;
  display: flex;
}
.pair-row .p-circ { margin-top: 1px; }
.bars {
  margin-left: 27px;
  width: 50px;
  height: 97px;
  background: #191919;
  display: flex;
  gap: 2px;
  padding-left: 1px;
}
.bars .vbar { height: 97px; }

.auto-row {
  margin-top: 2px;
  height: 25px;
  display: flex;
  align-items: center;
  padding-left: 66px;
}
.auto-lbl {
  width: 67px;
  font-size: 12.5px;
  white-space: nowrap;
}
.chk-sm {
  width: 25px;
  height: 25px;
  border: 2px solid #1db394;
  border-radius: 5px;
}
.chk-sm.on { background: #1fbe9c; }
.chk-sm svg { width: 100%; height: 100%; display: block; }
.chk-sm polyline { fill: none; stroke: #9ee6cf; stroke-width: 2; }

.frow.tapc { padding-left: 23px; }
.tapc .lbl { font-size: 16px; }

.tap-bpm {
  margin-top: 3px;
  height: 20px;
  line-height: 20px;
  text-align: center;
  padding-left: 14px;
  font-weight: bold;
  font-size: 14.5px;
  color: #2a6e8e;
  white-space: nowrap;
}
```
